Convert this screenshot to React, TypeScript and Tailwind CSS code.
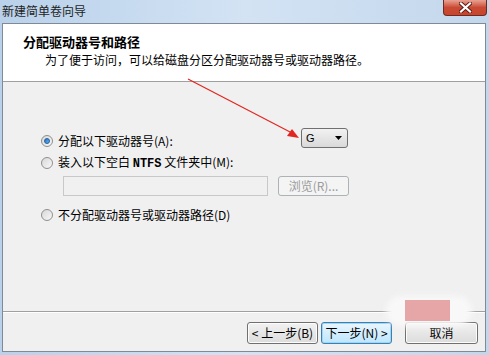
import { type ReactNode } from "react";

const cjk = { fontFamily: '"Noto Sans CJK SC", "Liberation Sans", sans-serif' };

function Radio({ checked = false }: { checked?: boolean }) {
    return (
        <span className="w-[12px] h-[12px] rounded-full border border-[#8e8f8f] bg-gradient-to-br from-[#d8d8d8] to-[#f8f8f8] flex items-center justify-center shrink-0">
            {checked && (
                <span className="w-[6px] h-[6px] rounded-full bg-gradient-to-br from-[#1a6fc4] to-[#6fb4ef] border border-[#1f5f9e]" />
            )}
        </span>
    );
}

function Button({ children, focused = false, className = "" }: { children: ReactNode; focused?: boolean; className?: string }) {
    return (
        <div
            className={`h-[22px] flex items-center justify-center rounded-[3px] border text-[12px] text-black ${
                focused
                    ? "border-[#3c7fb1] bg-gradient-to-b from-[#eaf6fd] to-[#bee6fd] shadow-[inset_0_0_0_1px_#9fd5f5]"
                    : "border-[#707070] bg-gradient-to-b from-[#f2f2f2] to-[#dcdcdc] shadow-[inset_0_0_0_1px_#fcfcfc]"
            } ${className}`}>
            {children}
        </div>
    );
}

export default function App() {
    return (
        <div className="w-[489px] h-[355px] relative overflow-hidden bg-gradient-to-r from-[#b9d1ea] via-[#d3e3f4] to-[#c3d7ec] flex flex-col" style={cjk}>
            {/* title bar */}
            <div className="h-[23px] flex items-start justify-between pl-[2px] pr-[2px]">
                <span className="text-[12px] leading-none mt-[5px] text-[#1e1e1e]">新建简单卷向导</span>
                <div className="w-[44px] h-[16px] rounded-b-[4px] border border-t-0 border-[#6e2a22] bg-gradient-to-b from-[#e8a193] via-[#c94a34] to-[#c8452c] flex items-center justify-center">
                    <svg width="13" height="11" viewBox="0 0 13 11">
                        <path d="M2 1.5 L11 9.5 M11 1.5 L2 9.5" stroke="#5a1a12" strokeWidth="4" strokeLinecap="square" />
                        <path d="M2 1.5 L11 9.5 M11 1.5 L2 9.5" stroke="#ffffff" strokeWidth="2.2" strokeLinecap="square" />
                    </svg>
                </div>
            </div>

            {/* client area */}
            <div className="flex-1 ml-[2px] mr-[3px] mb-[3px] border border-[#7f8a96] flex flex-col bg-[#f0f0f0]">
                <div className="h-[58px] bg-white border-b border-[#a0a0a0] pl-[20px] pt-[10px]">
                    <div className="text-[13px] font-bold leading-[15px] text-black">分配驱动器号和路径</div>
                    <div className="text-[12px] leading-[14px] mt-[4px] ml-[22px] text-black">为了便于访问，可以给磁盘分区分配驱动器号或驱动器路径。</div>
                </div>

                <div className="flex-1 pl-[38px] pt-[46px] text-[12px] text-black">
                    <div className="w-[307px] h-[20px] flex items-start justify-between">
                        <div className="h-[18px] mt-[4px] flex items-center gap-[5px]">
                            <Radio checked />
                            <span>分配以下驱动器号(A):</span>
                        </div>
                        <div className="w-[47px] h-[20px] rounded-[3px] border border-[#707070] bg-gradient-to-b from-[#f2f2f2] to-[#d9d9d9] flex items-center justify-between pl-[4px] pr-[5px]">
                            <span className="text-[11px]" style={{ fontFamily: '"Liberation Sans", sans-serif' }}>G</span>
                            <svg width="7" height="4" viewBox="0 0 7 4">
                                <path d="M0 0 H7 L3.5 4 Z" fill="#000" />
                            </svg>
                        </div>
                    </div>
                    <div className="h-[18px] flex items-center gap-[5px] mt-[6px]">
                        <Radio />
                        <span>
                            装入以下空白 <span style={{ fontFamily: '"Liberation Mono", monospace' }} className="font-bold">NTFS</span> 文件夹中(M):
                        </span>
                    </div>
                    <div className="flex items-center gap-[10px] mt-[4px] ml-[22px]">
                        <div className="w-[205px] h-[20px] border border-[#c8c8c8] bg-[#f0f0f0]" />
                        <div className="w-[71px] h-[20px] rounded-[3px] border border-[#adb2b5] bg-[#f4f4f4] flex items-center justify-center text-[12px] text-[#9a9a9a]">
                            浏览(R)...
                        </div>
                    </div>
                    <div className="h-[18px] flex items-center gap-[5px] mt-[10px]">
                        <Radio />
                        <span>不分配驱动器号或驱动器路径(D)</span>
                    </div>
                </div>

                <div className="h-[40px] border-t border-[#a0a0a0] shadow-[inset_0_1px_0_#ffffff] flex items-start justify-end pt-[10px] pr-[7px]">
                    <Button className="w-[71px]">&lt; 上一步(B)</Button>
                    <Button focused className="w-[71px] ml-[3px]">下一步(N) &gt;</Button>
                    <Button className="w-[73px] ml-[13px]">取消</Button>
                </div>
            </div>

            {/* red annotation arrow */}
            <svg className="absolute left-0 top-0 pointer-events-none" width="489" height="355">
                <line x1="188" y1="79" x2="292" y2="133" stroke="#e3251f" strokeWidth="1.2" />
                <path d="M299 138 L287 136 L292 129 Z" fill="#e3251f" />
            </svg>

            {/* watermark */}
            <div className="absolute left-[386px] top-[296px] w-[86px] h-[30px] rounded-full bg-[#f8f8f8] blur-[3px]" />
            <div className="absolute left-[405px] top-[300px] w-[45px] h-[21px] bg-[#e6a6a8]" />
        </div>
    );
}
